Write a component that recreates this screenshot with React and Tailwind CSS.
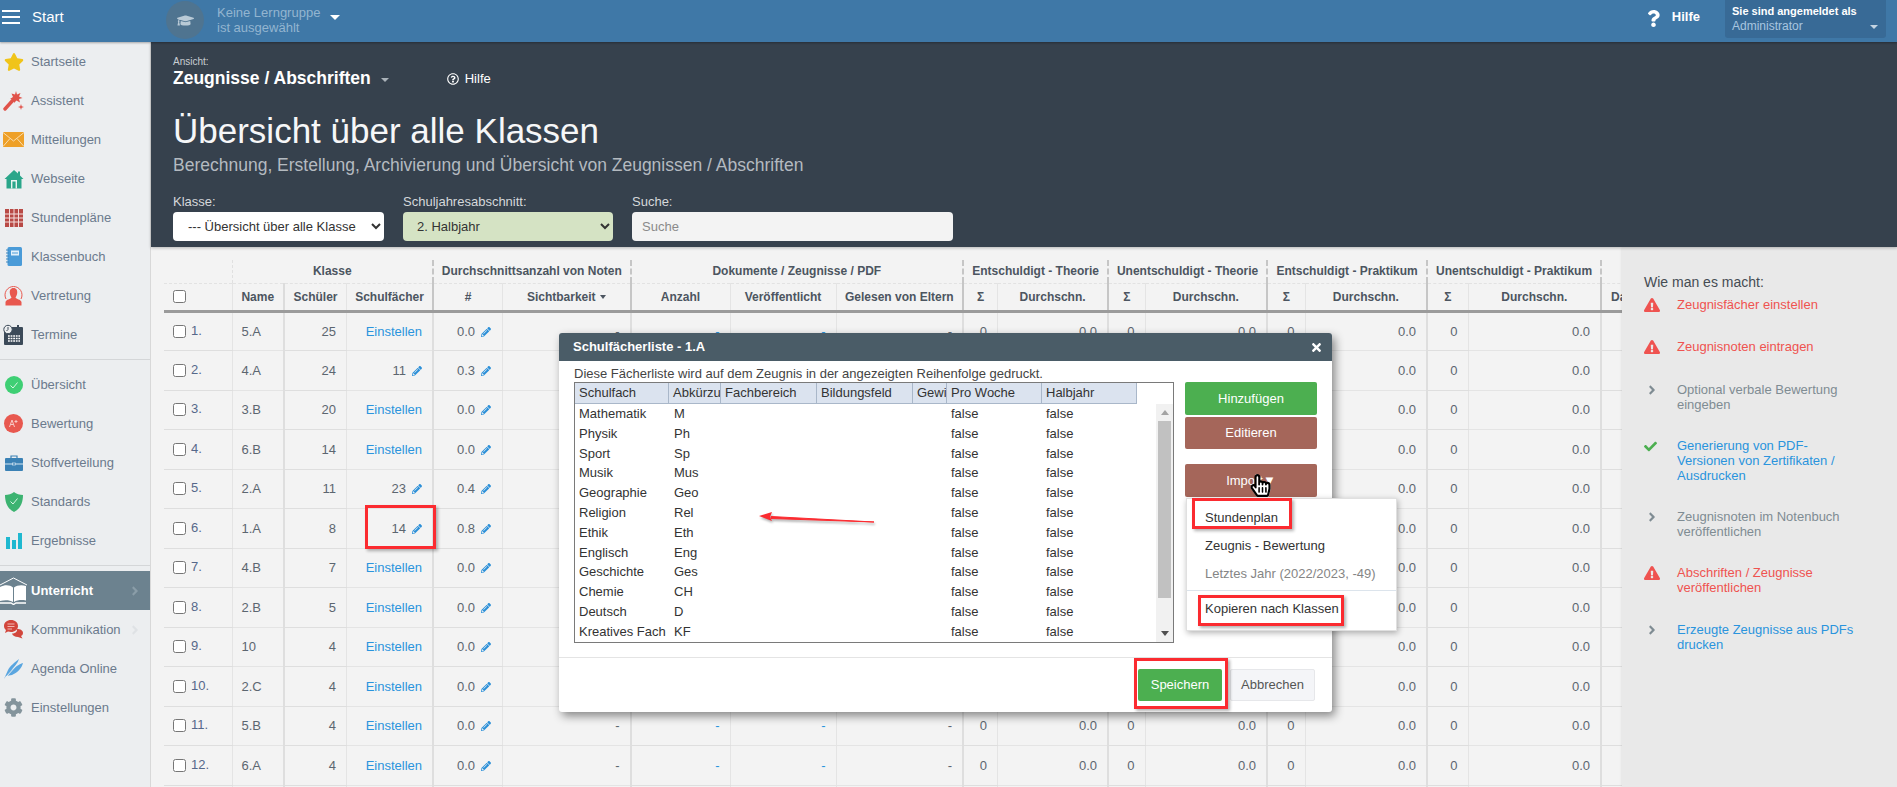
import { FaCog, FaStar, FaPencilAlt, FaExclamationTriangle, FaCheck, FaAngleRight, FaGraduationCap, FaHandPointer, FaRegHandPointer, FaRegQuestionCircle, FaQuestion, FaTimes } from 'react-icons/fa'

const Star = () => <FaStar className="text-[#f0c419]" size={20} />

const Wand = () => (
  <svg width="21" height="21" viewBox="0 0 21 21">
    <path d="M2 19 L11 9" stroke="#e0524a" strokeWidth="3.4" strokeLinecap="round" />
    <path d="M13 1 L14 4.5 L17.5 3 L16 6.5 L19.5 8 L16 9 L17 12.5 L13.5 10.5 L11 13 L10.5 9.5 L7 9 L10 7 L8.5 3.5 L12 4.5 Z" fill="#e0524a" />
    <path d="M18 14 L18.7 16.3 L21 17 L18.7 17.7 L18 20 L17.3 17.7 L15 17 L17.3 16.3 Z" fill="#e0524a" />
  </svg>
)

const Mail = () => (
  <svg width="21" height="15" viewBox="0 0 21 15">
    <rect width="21" height="15" fill="#eea028" />
    <path d="M0 0.5 L10.5 9 L21 0.5 M0 14.5 L7 6.5 M21 14.5 L14 6.5" stroke="#f8dcae" strokeWidth="1" fill="none" />
  </svg>
)

const Home = () => (
  <svg width="20" height="20" viewBox="0 0 20 20">
    <path d="M10 1 L14 4.5 V2.5 H16 V6.5 L19.5 10 H17.5 V19.5 H2.5 V10 H0.5 Z" fill="#2aa68a" />
    <path d="M7 11 H13 V19.5 H11.6 V12.4 H8.4 V19.5 H7 Z" fill="#e8f4f1" />
  </svg>
)

const Timetable = () => (
  <svg width="18" height="18" viewBox="0 0 18 18">
    <rect width="18" height="18" fill="#b84a46" />
    <path d="M0 5 H18 M0 9 H18 M0 13 H18 M4.5 0 V18 M9 0 V18 M13.5 0 V18" stroke="#f4dedd" strokeWidth="1" />
  </svg>
)

const Notebook = () => (
  <svg width="16" height="19" viewBox="0 0 16 19">
    <rect x="1.5" width="14.5" height="19" rx="1.5" fill="#4a9bd8" />
    <rect x="5" y="3.5" width="8" height="5" fill="#e2f0fa" />
    <path d="M6 6 H12" stroke="#4a9bd8" strokeWidth="1" />
    <path d="M0 3 H3 M0 6 H3 M0 9 H3 M0 12 H3 M0 15 H3" stroke="#3d86bd" strokeWidth="1" />
  </svg>
)

const Person = () => (
  <svg width="19" height="21" viewBox="0 0 19 21">
    <path d="M2 14 A8.5 8.5 0 1 1 17 14" stroke="#e8584f" strokeWidth="1" fill="none" />
    <path d="M9.5 3 C12.5 3 13.5 5.5 13.2 8 C13 10 12 11.5 11.5 12.5 C12 14 17 14.5 17.5 17 V20.5 H1.5 V17 C2 14.5 7 14 7.5 12.5 C7 11.5 6 10 5.8 8 C5.5 5.5 6.5 3 9.5 3 Z" fill="#e8584f" />
  </svg>
)

const Calendar = () => (
  <svg width="21" height="21" viewBox="0 0 21 21">
    <rect x="1" y="3" width="19" height="18" rx="1" fill="#3c4a59" />
    <path d="M5 12 H17 M5 14.5 H17 M5 17 H17" stroke="#fff" strokeWidth="1.6" strokeDasharray="1.8 .8" />
    <circle cx="5" cy="5.5" r="4.2" fill="#eceef0" stroke="#3c4a59" strokeWidth="1" />
    <path d="M5 3 V5.5 L3.5 7" stroke="#3c4a59" strokeWidth="1" fill="none" />
    <rect x="14" y="1" width="2" height="3" fill="#3c4a59" />
  </svg>
)

const GreenCheck = () => (
  <svg width="18" height="18" viewBox="0 0 18 18">
    <circle cx="9" cy="9" r="9" fill="#3ecf74" />
    <path d="M5.5 9.5 L8 12 L12.5 6.5" stroke="#d9f7e4" strokeWidth="1" fill="none" />
  </svg>
)

const Grade = () => (
  <svg width="19" height="19" viewBox="0 0 19 19">
    <circle cx="9.5" cy="9.5" r="9.5" fill="#e8584f" />
    <path d="M5.5 13 L8 6 L10.5 13 M6.5 10.5 H9.5 M12 6 L12 9 M10.5 7.5 H13.5" stroke="#f7c9c5" strokeWidth="1" fill="none" />
  </svg>
)

const Briefcase = () => (
  <svg width="18" height="16" viewBox="0 0 18 16">
    <path d="M6 3 V1 H12 V3" stroke="#3a81b5" strokeWidth="1.2" fill="none" />
    <rect y="3" width="18" height="13" rx="1" fill="#3a81b5" />
    <path d="M0 9 H18" stroke="#d4e6f2" strokeWidth="1" />
    <rect x="7.5" y="8" width="3" height="2" fill="#3a81b5" stroke="#d4e6f2" strokeWidth=".7" />
  </svg>
)

const Shield = () => (
  <svg width="18" height="20" viewBox="0 0 18 20">
    <path d="M9 0 C11 2 15 3 18 3 C18 11 15 17 9 20 C3 17 0 11 0 3 C3 3 7 2 9 0 Z" fill="#3cb371" />
    <path d="M5.5 9.5 L8 12 L12.5 6.5" stroke="#d9f7e4" strokeWidth="1" fill="none" />
  </svg>
)

const Bars = () => (
  <svg width="16" height="16" viewBox="0 0 16 16">
    <rect x="0" y="4" width="4" height="12" fill="#1fb8d0" />
    <rect x="6" y="7" width="4" height="9" fill="#1fb8d0" />
    <rect x="12" y="0" width="4" height="16" fill="#1fb8d0" />
  </svg>
)

const Book = () => (
  <svg width="27" height="28" viewBox="0 0 27 28">
    <path d="M0 8 L13.5 1 L27 8" stroke="#fff" strokeWidth="1" fill="none" />
    <path d="M0 10 C5 7.5 10 8 13 10.5 V25 C10 23 5 22.5 0 24 Z M14 10.5 C17 8 22 7.5 26 9 V23.5 C22 22.5 17 23 14 25 Z" fill="#fff" />
    <path d="M0 26 H11 L13.5 27.5 L16 26 H26" stroke="#fff" strokeWidth="1.4" fill="none" />
  </svg>
)

const Bubbles = () => (
  <svg width="20" height="19" viewBox="0 0 20 19">
    <path d="M7 0 C11 0 14 2.5 14 6 C14 9.5 11 12 7 12 C6 12 5 11.8 4 11.5 L1 13 L2 10 C0.700 9 0 7.600 0 6 C0 2.500 3 0 7 0 Z" fill="#d2463c" />
    <path d="M3.500 4 H10.500 M3.500 6.500 H10.500 M3.500 9 H8" stroke="#f2b6b1" strokeWidth="1" />
    <path d="M13 9 C16.500 9 19 10.500 19 13 C19 14.500 18 15.500 17 16 L18.500 18.500 L14 17 C11 17 8.500 15.500 8 13.500 C11 13.500 13.500 12 13 9 Z" fill="#d2463c" />
  </svg>
)

const Feather = () => (
  <svg width="20" height="20" viewBox="0 0 20 20">
    <path d="M0 20 L4 11 C6 7 11 3 15 0 C14 4 10 8 6.500 12 C10 9 15 5 19 4 C18 9 13 14 8 16 L2 17 Z" fill="#5aa6e0" />
    <path d="M2 18 L12 7" stroke="#eceef0" strokeWidth="1" />
  </svg>
)

const menuTop = [
  { label: 'Startseite', icon: <Star /> },
  { label: 'Assistent', icon: <Wand /> },
  { label: 'Mitteilungen', icon: <Mail /> },
  { label: 'Webseite', icon: <Home /> },
  { label: 'Stundenpläne', icon: <Timetable /> },
  { label: 'Klassenbuch', icon: <Notebook /> },
  { label: 'Vertretung', icon: <Person /> },
  { label: 'Termine', icon: <Calendar /> },
]

const menuMid = [
  { label: 'Übersicht', icon: <GreenCheck /> },
  { label: 'Bewertung', icon: <Grade /> },
  { label: 'Stoffverteilung', icon: <Briefcase /> },
  { label: 'Standards', icon: <Shield /> },
  { label: 'Ergebnisse', icon: <Bars /> },
]

function MenuItem({ label, icon, arrow }) {
  return (
    <div className="h-[39px] flex items-center text-[13px] text-[#6b7a8d]">
      <div className="w-[31px] pl-[3px] pr-[7px] flex justify-center shrink-0">{icon}</div>
      <span>{label}</span>
      {arrow && <FaAngleRight className="ml-auto mr-[8px] text-[#dfe2e5]" size={14} />}
    </div>
  )
}

function Sidebar() {
  return (
    <aside className="w-[151px] shrink-0 bg-[#eceef0] border-r border-[#d8d8d8]">
      {menuTop.map(m => <MenuItem key={m.label} {...m} />)}
      <div className="my-[5px] h-px bg-[#d4d6d8]" />
      {menuMid.map(m => <MenuItem key={m.label} {...m} />)}
      <div className="mt-[5px] mb-[5px] h-px bg-[#d4d6d8]" />
      <div className="h-[39px] flex items-center bg-[#6c828f] text-[13px] font-bold text-white">
        <div className="w-[31px] shrink-0"><Book /></div>
        <span>Unterricht</span>
        <FaAngleRight className="ml-auto mr-[8px] text-[#8a9da8]" size={14} />
      </div>
      <MenuItem label="Kommunikation" icon={<Bubbles />} arrow />
      <MenuItem label="Agenda Online" icon={<Feather />} />
      <MenuItem label="Einstellungen" icon={<FaCog className="text-[#84949c]" size={19} />} />
    </aside>
  )
}

function TopBar() {
  return (
    <header className="h-[42px] shrink-0 bg-[#3f78a7] flex items-start text-white font-['Liberation_Sans',sans-serif] relative z-10 shadow-[0_1px_2px_rgba(0,0,0,0.3)]">
      <div className="w-[166px] h-[34px] flex items-center pl-[2px]">
        <div className="w-[18px] flex flex-col gap-[4px]">
          <div className="h-[2px] bg-white" />
          <div className="h-[2px] bg-white" />
          <div className="h-[2px] bg-white" />
        </div>
        <span className="ml-[12px] text-[15px]">Start</span>
      </div>
      <div className="mt-px w-[38px] h-[38px] rounded-full bg-[#4f7490] flex items-center justify-center">
        <FaGraduationCap className="text-[#b9cad6]" size={17} />
      </div>
      <div className="ml-[13px] mt-[5px] text-[13px] leading-[15px] text-[#93b5d0]">
        <div>Keine Lerngruppe</div>
        <div>ist ausgewählt</div>
      </div>
      <div className="ml-[10px] mt-[15px] border-x-[5px] border-x-transparent border-t-[5px] border-t-white" />
      <div className="ml-auto flex items-start">
        <FaQuestion className="mt-[10px]" size={17} />
        <span className="ml-[10px] mt-[9px] text-[13px] leading-[15px] font-bold">Hilfe</span>
        <div className="ml-[25px] mr-[11px] w-[161px] h-[38px] bg-[#386a96] rounded-b-[3px] pl-[7px] pt-[4px] relative">
          <div className="text-[11px] leading-[14px] font-bold">Sie sind angemeldet als</div>
          <div className="text-[12px] leading-[17px] text-[#a9c6e0]">Administrator</div>
          <div className="absolute right-[8px] top-[25px] border-x-[4px] border-x-transparent border-t-[4px] border-t-[#c4d4e2]" />
        </div>
      </div>
    </header>
  )
}

function PageHead() {
  return (
    <section className="h-[205px] shrink-0 bg-[#36414d] pl-[22px] text-white relative shadow-[0_1px_3px_rgba(0,0,0,0.25)]">
      <div className="pt-[14px] text-[10px] leading-[12px] text-[#c9ced3]">Ansicht:</div>
      <div className="flex items-center h-[21px]">
        <span className="text-[17.5px] font-bold">Zeugnisse / Abschriften</span>
        <div className="ml-[10px] mt-[2px] border-x-[4px] border-x-transparent border-t-[4px] border-t-[#aab2b9]" />
        <FaRegQuestionCircle className="ml-[58px]" size={12} />
        <span className="ml-[6px] text-[13px]">Hilfe</span>
      </div>
      <h1 className="mt-[22px] text-[35px] leading-[40px] font-normal text-[#f6f7f8]">Übersicht über alle Klassen</h1>
      <p className="mt-[4px] text-[17.5px] leading-[20px] text-[#b4bac0]">Berechnung, Erstellung, Archivierung und Übersicht von Zeugnissen / Abschriften</p>
      <div className="mt-[20px] flex gap-[19px] text-[13px]">
        <div>
          <div className="h-[17px] leading-[14px] text-[#d5d8db]">Klasse:</div>
          <select className="w-[211px] h-[29px] bg-white text-[#333] rounded-[4px] pl-[11px] pr-[12px] text-[13px]">
            <option>--- Übersicht über alle Klassen ---</option>
          </select>
        </div>
        <div>
          <div className="h-[17px] leading-[14px] text-[#d5d8db]">Schuljahresabschnitt:</div>
          <select className="w-[210px] h-[29px] bg-[#d5e3c4] text-[#333] rounded-[4px] pl-[10px] text-[13px]">
            <option>2. Halbjahr</option>
          </select>
        </div>
        <div>
          <div className="h-[17px] leading-[14px] text-[#d5d8db]">Suche:</div>
          <input placeholder="Suche" className="w-[321px] h-[29px] bg-[#f3f3f3] rounded-[4px] px-[10px] text-[13px] placeholder:text-[#8a8a8a] block" />
        </div>
      </div>
    </section>
  )
}

const rows = [
  { n: '1.', name: '5.A', count: 25, avg: '0.0' },
  { n: '2.', name: '4.A', count: 24, subjects: 11, avg: '0.3' },
  { n: '3.', name: '3.B', count: 20, avg: '0.0' },
  { n: '4.', name: '6.B', count: 14, avg: '0.0' },
  { n: '5.', name: '2.A', count: 11, subjects: 23, avg: '0.4' },
  { n: '6.', name: '1.A', count: 8, subjects: 14, avg: '0.8' },
  { n: '7.', name: '4.B', count: 7, avg: '0.0' },
  { n: '8.', name: '2.B', count: 5, avg: '0.0' },
  { n: '9.', name: '10', count: 4, avg: '0.0' },
  { n: '10.', name: '2.C', count: 4, avg: '0.0' },
  { n: '11.', name: '5.B', count: 4, avg: '0.0' },
  { n: '12.', name: '6.A', count: 4, avg: '0.0' },
]

const widths = [68, 52, 62.5, 86.5, 69.5, 128, 99.5, 106, 127, 34.5, 110.5, 37, 122, 38, 122, 41, 133, 60]

const Pencil = () => <FaPencilAlt className="inline-block ml-[6px] text-[#2a8fd8] align-[-1px]" size={10} />

const thin = 'border-l border-[#e4e4e4]'
const thick = 'border-l-2 border-[#dcdcdc]'
const headThin = 'border-l border-[#e0e0e0]'
const headThick = 'border-l-2 border-[#c6c6c6]'

function Num({ v, cls }) {
  return <td className={`${cls} text-right pr-[10px] text-[#5c6670] border-b border-[#dedede]`}>{v}</td>
}

function Row({ r }) {
  return (
    <tr className="h-[39.5px]">
      <td className="border-b border-[#dedede] pl-[9px]">
        {r && (
          <div className="flex items-center gap-[5px]">
            <input type="checkbox" className="w-[13px] h-[13px]" />
            <span className="text-[#56688a] -mt-[2px]">{r.n}</span>
          </div>
        )}
      </td>
      <td className={`${thin} pl-[9px] text-[#5c6670] border-b border-[#dedede]`}>{r?.name}</td>
      <Num cls={thick} v={r?.count} />
      <td className={`${thin} text-right pr-[10px] border-b border-[#dedede]`}>
        {r && (r.subjects
          ? <span className="text-[#5c6670]">{r.subjects}<Pencil /></span>
          : <a className="text-[#2a94dd]">Einstellen</a>)}
      </td>
      <td className={`${thick} text-right pr-[11px] text-[#5c6670] border-b border-[#dedede]`}>
        {r && <span>{r.avg}<Pencil /></span>}
      </td>
      <Num cls={thin} v={r && '-'} />
      <td className={`${thick} text-right pr-[10px] text-[#2a94dd] border-b border-[#dedede]`}>{r && '-'}</td>
      <td className={`${thin} text-right pr-[10px] text-[#2a94dd] border-b border-[#dedede]`}>{r && '-'}</td>
      <Num cls={thin} v={r && '-'} />
      <Num cls={thick} v={r && '0'} />
      <Num cls={thin} v={r && '0.0'} />
      <Num cls={thick} v={r && '0'} />
      <Num cls={thin} v={r && '0.0'} />
      <Num cls={thick} v={r && '0'} />
      <Num cls={thin} v={r && '0.0'} />
      <Num cls={thick} v={r && '0'} />
      <Num cls={thin} v={r && '0.0'} />
      <td className={`${thick} border-b border-[#dedede]`} />
    </tr>
  )
}

function GradesTable() {
  const sub = 'font-bold whitespace-nowrap overflow-hidden border-b-[3px] border-b-[#9b9b9b]'
  const top = 'font-bold whitespace-nowrap border-b border-dashed border-b-[#e2e2e2]'
  return (
    <div className="flex-1 min-w-0 overflow-hidden bg-[#f3f3f3] pl-[13px] pt-[13px]">
      <table className="table-fixed border-collapse w-[1493px] text-[13px] text-[#5c6670]">
        <colgroup>
          {widths.map((w, i) => <col key={i} style={{ width: w }} />)}
        </colgroup>
        <thead className="text-[12px] text-[#4c5560]">
          <tr className="h-[23px]">
            <th className={top} />
            <th colSpan="3" className={`${top} ${headThin}`}>Klasse</th>
            <th colSpan="2" className={`${top} ${headThick}`}>Durchschnittsanzahl von Noten</th>
            <th colSpan="3" className={`${top} ${headThick}`}>Dokumente / Zeugnisse / PDF</th>
            <th colSpan="2" className={`${top} ${headThick}`}>Entschuldigt - Theorie</th>
            <th colSpan="2" className={`${top} ${headThick}`}>Unentschuldigt - Theorie</th>
            <th colSpan="2" className={`${top} ${headThick}`}>Entschuldigt - Praktikum</th>
            <th colSpan="2" className={`${top} ${headThick}`}>Unentschuldigt - Praktikum</th>
            <th className={`${top} ${headThick}`} />
          </tr>
          <tr className="h-[28px]">
            <th className={`${sub} text-left pl-[9px]`}><input type="checkbox" className="w-[13px] h-[13px] block" /></th>
            <th className={`${sub} ${thin}`}>Name</th>
            <th className={`${sub} ${thick}`}>Schüler</th>
            <th className={`${sub} ${thin}`}>Schulfächer</th>
            <th className={`${sub} ${headThick}`}>#</th>
            <th className={`${sub} ${thin}`}>
              Sichtbarkeit
              <span className="inline-block ml-[4px] align-[2px] border-x-[3.5px] border-x-transparent border-t-[4px] border-t-[#4c5560]" />
            </th>
            <th className={`${sub} ${headThick}`}>Anzahl</th>
            <th className={`${sub} ${thin}`}>Veröffentlicht</th>
            <th className={`${sub} ${thin}`}>Gelesen von Eltern</th>
            <th className={`${sub} ${headThick}`}>Σ</th>
            <th className={`${sub} ${thin}`}>Durchschn.</th>
            <th className={`${sub} ${headThick}`}>Σ</th>
            <th className={`${sub} ${thin}`}>Durchschn.</th>
            <th className={`${sub} ${headThick}`}>Σ</th>
            <th className={`${sub} ${thin}`}>Durchschn.</th>
            <th className={`${sub} ${headThick}`}>Σ</th>
            <th className={`${sub} ${thin}`}>Durchschn.</th>
            <th className={`${sub} ${headThick} text-left pl-[9px]`}>Datum</th>
          </tr>
        </thead>
        <tbody>
          {rows.map(r => <Row key={r.n} r={r} />)}
          <Row />
        </tbody>
      </table>
    </div>
  )
}

const steps = [
  { kind: 'warn', text: 'Zeugnisfächer einstellen' },
  { kind: 'warn', text: 'Zeugnisnoten eintragen' },
  { kind: 'todo', text: 'Optional verbale Bewertung eingeben' },
  { kind: 'done', text: 'Generierung von PDF-Versionen von Zertifikaten / Ausdrucken' },
  { kind: 'todo', text: 'Zeugnisnoten im Notenbuch veröffentlichen' },
  { kind: 'warn', text: 'Abschriften / Zeugnisse veröffentlichen' },
  { kind: 'link', text: 'Erzeugte Zeugnisse aus PDFs drucken' },
]

function StepIcon({ kind }) {
  if (kind === 'warn') return <FaExclamationTriangle className="text-[#ef5350]" size={16} />
  if (kind === 'done') return <FaCheck className="text-[#4caf50] mt-[2px]" size={13} />
  return <FaAngleRight className="text-[#7f8c93] ml-[1px] mt-[1px]" size={14} />
}

function HowTo() {
  const colors = { warn: 'text-[#ef5350]', todo: 'text-[#7f8c93]', done: 'text-[#2a94dd]', link: 'text-[#2a94dd]' }
  return (
    <aside className="w-[275px] shrink-0 bg-[#e9e9e9] pl-[22px] pt-[27px] shadow-[-1px_0_2px_rgba(0,0,0,0.06)]">
      <h3 className="text-[14px] leading-[16px] font-normal text-[#454c53]">Wie man es macht:</h3>
      <div className="mt-[7px] flex flex-col gap-[26.25px]">
        {steps.map(s => (
          <div key={s.text} className="flex">
            <div className="w-[33px] shrink-0"><StepIcon kind={s.kind} /></div>
            <div className={`w-[185px] text-[13px] leading-[15px] ${colors[s.kind]}`}>{s.text}</div>
          </div>
        ))}
      </div>
    </aside>
  )
}

const subjects = [
  ['Mathematik', 'M'], ['Physik', 'Ph'], ['Sport', 'Sp'], ['Musik', 'Mus'], ['Geographie', 'Geo'], ['Religion', 'Rel'],
  ['Ethik', 'Eth'], ['Englisch', 'Eng'], ['Geschichte', 'Ges'], ['Chemie', 'CH'], ['Deutsch', 'D'], ['Kreatives Fach', 'KF'],
]

const listCols = [
  { label: 'Schulfach', w: 'w-[94px]' },
  { label: 'Abkürzung', w: 'w-[52px]' },
  { label: 'Fachbereich', w: 'w-[96px]' },
  { label: 'Bildungsfeld', w: 'w-[96px]' },
  { label: 'Gewicht', w: 'w-[34px]' },
  { label: 'Pro Woche', w: 'w-[95px]' },
  { label: 'Halbjahr', w: 'w-[95px]' },
]

function SubjectList() {
  return (
    <div className="h-[261px] border border-[#7a7a7a] flex flex-col text-[#333] relative">
      <div className="flex h-[21px] shrink-0">
        {listCols.map(c => (
          <div key={c.label} className={`${c.w} h-full bg-[#dbe3ef] border-r border-b border-[#a9b7c9] pl-[4px] leading-[20px] overflow-hidden whitespace-nowrap`}>{c.label}</div>
        ))}
      </div>
      <div className="flex-1 flex min-h-0">
        <div className="flex-1">
          {subjects.map(([name, short]) => (
            <div key={name} className="flex h-[19.8px] leading-[19.8px]">
              <div className="w-[94px] pl-[4px] whitespace-nowrap">{name}</div>
              <div className="w-[278px] pl-[5px]">{short}</div>
              <div className="w-[95px] pl-[4px]">false</div>
              <div className="w-[95px] pl-[4px]">false</div>
            </div>
          ))}
        </div>
        <div className="w-[17px] shrink-0 bg-[#f1f1f1] flex flex-col items-center">
          <div className="h-[17px] flex items-center"><div className="border-x-[4px] border-x-transparent border-b-[5px] border-b-[#a3a3a3]" /></div>
          <div className="mx-auto w-[13px] h-[177px] bg-[#c1c1c1]" />
          <div className="mt-auto h-[17px] flex items-center"><div className="border-x-[4px] border-x-transparent border-t-[5px] border-t-[#505050]" /></div>
        </div>
      </div>
    </div>
  )
}

function Dialog() {
  return (
    <div className="absolute left-[559px] top-[333px] w-[773px] h-[379px] bg-white rounded-[3px] shadow-[3px_4px_10px_rgba(0,0,0,0.45)] flex flex-col text-[13px]">
      <div className="h-[28px] shrink-0 bg-[#4a5c67] rounded-t-[3px] flex items-center justify-between pl-[14px] pr-[9px] text-white">
        <span className="font-bold">Schulfächerliste - 1.A</span>
        <FaTimes size={13} />
      </div>
      <div className="flex-1 flex px-[15px] gap-[11px]">
        <div className="w-[600px]">
          <div className="h-[21px] pt-[5px] leading-[16px] text-[#444] whitespace-nowrap">Diese Fächerliste wird auf dem Zeugnis in der angezeigten Reihenfolge gedruckt.</div>
          <SubjectList />
        </div>
        <div className="w-[132px] pt-[21px] flex flex-col text-white">
          <button className="h-[33px] bg-[#4caf50] rounded-[2px]">Hinzufügen</button>
          <button className="mt-[2px] h-[32px] bg-[#a5665a] rounded-[2px]">Editieren</button>
          <button className="mt-[15px] h-[33px] bg-[#a5665a] rounded-[2px]">Import▼</button>
        </div>
      </div>
      <div className="h-[55px] shrink-0 border-t border-[#e4e4e4] flex justify-end items-start pt-[11px] pr-[17px] gap-[8px]">
        <button className="w-[84px] h-[32px] bg-[#4caf50] text-white rounded-[2px]">Speichern</button>
        <button className="w-[85px] h-[32px] bg-[#f4f5f8] border border-[#e6e7ea] text-[#555] rounded-[2px]">Abbrechen</button>
      </div>
      <div className="absolute left-[627px] top-[165px] w-[211px] h-[133px] bg-white border border-[#e0e0e0] shadow-[1px_2px_6px_rgba(0,0,0,0.3)] pl-[18px] text-[#333]">
        <div className="h-[37px] pt-[11px] leading-[16px]">Stundenplan</div>
        <div className="h-[28px] leading-[20px]">Zeugnis - Bewertung</div>
        <div className="h-[26px] leading-[20px] text-[#858585]">Letztes Jahr (2022/2023, -49)</div>
        <div className="-ml-[18px] h-px bg-[#dce4ec]" />
        <div className="mt-[10px] leading-[16px]">Kopieren nach Klassen</div>
      </div>
    </div>
  )
}

const box = 'absolute border-[3px] border-[#fb2b30] shadow-[2px_2px_3px_rgba(0,0,0,0.3)]'

export default function App() {
  return (
    <div className="relative h-screen overflow-hidden flex flex-col font-['Liberation_Sans',sans-serif]">
      <TopBar />
      <div className="flex-1 flex min-h-0">
        <Sidebar />
        <main className="flex-1 min-w-0 flex flex-col">
          <PageHead />
          <div className="flex-1 flex min-h-0">
            <GradesTable />
            <HowTo />
          </div>
        </main>
      </div>

      <Dialog />

      <div className={`${box} left-[365px] top-[505px] w-[71px] h-[44px]`} />
      <div className={`${box} left-[1192px] top-[498px] w-[100px] h-[31px]`} />
      <div className={`${box} left-[1198px] top-[595px] w-[146px] h-[31px]`} />
      <div className={`${box} left-[1134px] top-[658px] w-[94px] h-[51px]`} />

      <svg className="absolute left-[755px] top-[510px] drop-shadow-[1px_2px_1px_rgba(0,0,0,0.3)]" width="122" height="16" viewBox="0 0 122 16">
        <path d="M119 12 L16 6.500 L16 8.500 Z" fill="#fb2b30" stroke="#fb2b30" strokeWidth="1" />
        <path d="M4 6 L17 2 L15 7 L17 11 Z" fill="#fb2b30" />
      </svg>

      <div className="absolute left-[1249px] top-[474px] w-[20px] h-[23px]">
        <FaHandPointer className="absolute inset-0 text-white" size={23} />
        <FaRegHandPointer className="absolute inset-0 text-black" size={23} />
      </div>
    </div>
  )
}
